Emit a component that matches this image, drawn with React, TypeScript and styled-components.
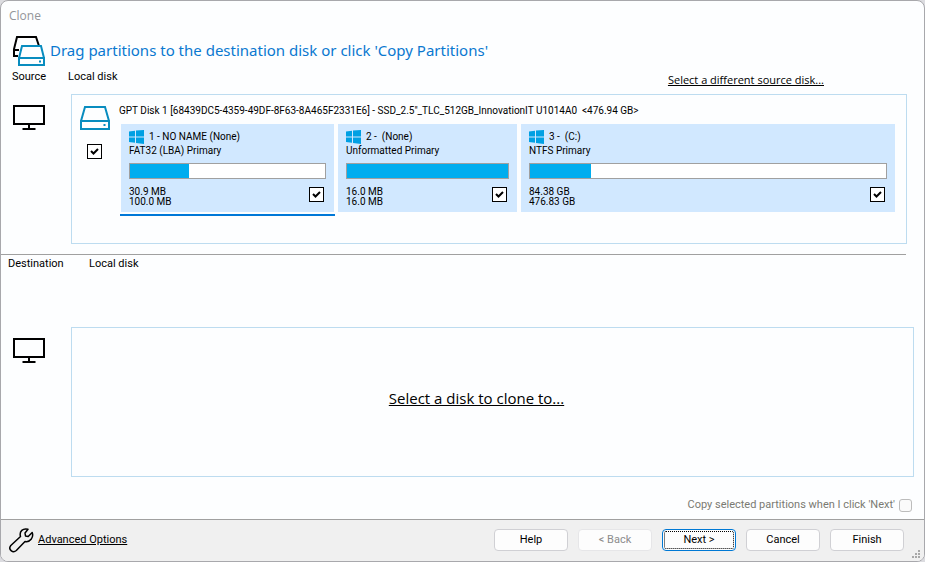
import React from "react";
import styled, { createGlobalStyle } from "styled-components";

const GlobalStyle = createGlobalStyle`
  *, *::before, *::after { box-sizing: border-box; }
  body {
    margin: 0;
    background: #dcdce0;
    color: #000;
    font-family: Roboto, "Noto Sans", sans-serif;
    font-size: 11px;
    line-height: 14px;
  }
  h1, h2, p { margin: 0; font-weight: 400; }
`;

const Dialog = styled.main`
  display: flex;
  flex-direction: column;
  min-height: 100vh;
  background: #fdfeff;
  border: 1px solid #a8a8ac;
  border-radius: 8px;
  overflow: hidden;
`;

const TitleBar = styled.header`
  padding: 6px 8px 0;
  height: 34px;
  color: #939599;
  font-family: "Open Sans", sans-serif;
  font-size: 12px;
  line-height: 18px;
`;

const Heading = styled.div`
  display: flex;
  align-items: center;
  gap: 4px;
  height: 32px;
  padding-left: 12px;
`;

const HeadingText = styled.h1`
  color: #0a78d0;
  font-family: "Noto Sans", sans-serif;
  font-size: 15px;
  line-height: 24px;
  padding-bottom: 2px;
`;

const SourceLabels = styled.div`
  display: grid;
  grid-template-columns: 56px 1fr auto;
  height: 27px;
  padding: 2px 100px 0 11px;
  line-height: 16px;
`;

const SourceLink = styled.a`
  padding-top: 3px;
  color: #000;
  font-family: "Open Sans", sans-serif;
  line-height: 16px;
`;

const DiskRow = styled.section<{ $right: number }>`
  display: grid;
  grid-template-columns: 58px 1fr;
  padding: 0 ${(p) => p.$right}px 0 12px;
  min-height: 150px;
`;

const IconSlot = styled.div`
  padding-top: 9px;
`;

const SourcePanel = styled.div`
  display: grid;
  grid-template-columns: 32px 1fr;
  gap: 8px;
  padding: 8px 11px 0 7px;
  border: 1px solid #bddcf0;
`;

const DiskColumn = styled.div`
  display: flex;
  flex-direction: column;
  align-items: center;
  gap: 13px;
  padding: 2px 1px 0 0;
`;

const DiskName = styled.h2`
  font-size: 10px;
  line-height: 16px;
  white-space: pre;
`;

const Partitions = styled.div`
  display: grid;
  grid-template-columns: 213fr 179fr 374fr;
  gap: 4px;
  padding: 5px 0 0 2px;
`;

const Partition = styled.article<{ $active?: boolean }>`
  position: relative;
  height: 88px;
  padding: 5px 8px 0;
  background: #d1e8ff;
  font-size: 10px;

  &::after {
    content: "";
    display: ${(p) => (p.$active ? "block" : "none")};
    position: absolute;
    left: -1px;
    right: -1px;
    bottom: -4px;
    height: 2px;
    background: #0078d7;
  }
`;

const PartitionName = styled.div`
  display: flex;
  align-items: center;
  gap: 5px;
  height: 15px;
  white-space: pre;
`;

const PartitionType = styled.p`
  line-height: 14px;
`;

const Meter = styled.div`
  height: 16px;
  margin-top: 5px;
  background: #fff;
  border: 1px solid #a0a0a0;
`;

const MeterFill = styled.div`
  height: 100%;
  background: #00adef;
`;

const PartitionFoot = styled.div`
  display: flex;
  justify-content: space-between;
  align-items: flex-start;
  padding: 8px 2px 0 0;
  line-height: 10px;
`;

const TickLabel = styled.label`
  display: grid;
  width: 15px;
  height: 15px;

  & > * { grid-area: 1 / 1; }
  & > svg { pointer-events: none; visibility: hidden; }
  & > input:checked + svg { visibility: visible; }
`;

const TickInput = styled.input`
  appearance: none;
  width: 15px;
  height: 15px;
  margin: 0;
  background: #fff;
  border: 1px solid #000;
`;

const Separator = styled.hr`
  width: calc(100% - 18px);
  height: 1px;
  margin: 10px 0 0;
  border: 0;
  background: #a0a0a0;
`;

const DestinationLabels = styled.div`
  display: grid;
  grid-template-columns: 81px 1fr;
  height: 72px;
  padding: 1px 0 0 7px;
  line-height: 16px;
`;

const DestinationPanel = styled.div`
  display: flex;
  align-items: center;
  justify-content: center;
  padding-bottom: 8px;
  border: 1px solid #bddcf0;
`;

const CloneLink = styled.a`
  margin-right: 32px;
  color: #000;
  font-family: "Open Sans", sans-serif;
  font-size: 15px;
  line-height: 20px;
`;

const CopyRow = styled.label`
  display: flex;
  justify-content: flex-end;
  align-items: center;
  gap: 4px;
  margin-top: auto;
  padding: 0 12px 6px 0;
  color: #7a7a72;
  line-height: 16px;
`;

const CopyInput = styled.input`
  appearance: none;
  width: 13px;
  height: 13px;
  margin: 0;
  background: #fafafa;
  border: 1px solid #bcbcbc;
  border-radius: 3px;
`;

const Footer = styled.footer`
  position: relative;
  display: flex;
  align-items: center;
  justify-content: space-between;
  height: 42px;
  padding: 0 20px 2px 8px;
  background: #f0f0f0;
  border-top: 1px solid #a0a0a0;
`;

const Advanced = styled.a`
  display: flex;
  align-items: center;
  gap: 4px;
  color: #000;
`;

const Buttons = styled.div`
  display: flex;
  gap: 10px;
`;

const Button = styled.button<{ $primary?: boolean }>`
  width: 74px;
  height: 22px;
  padding: 0;
  background: #fdfdfd;
  color: #000;
  border: 1px solid ${(p) => (p.$primary ? "#0078d4" : "#d0d0d4")};
  border-radius: 4px;
  font: inherit;
  line-height: 16px;
  outline: ${(p) => (p.$primary ? "1px dotted #000" : "none")};
  outline-offset: -3px;

  &:disabled { color: #8c8c8c; border-color: #e6e6e8; }
`;

const Grip = styled.svg`
  position: absolute;
  right: 4px;
  bottom: 3px;
`;

const Monitor = () => (
  <svg width="33" height="28" viewBox="0 0 33 28" fill="none" aria-hidden="true">
    <rect x="1" y="3" width="30" height="18" stroke="#000" strokeWidth="2" />
    <path d="M16 21v4M9.500 26h13" stroke="#000" strokeWidth="2" />
  </svg>
);

const Drive = () => (
  <svg width="31" height="26" viewBox="-1 0 31 26" fill="none" stroke="#088cbf" strokeWidth="2" aria-hidden="true">
    <path d="M1 16 5 2h20l4 14M1 16h28v8H1z" />
    <path d="M23.500 20h2" />
  </svg>
);

const DrivePair = () => (
  <svg width="33" height="32" viewBox="0 0 33 32" fill="none" strokeWidth="2" aria-hidden="true">
    <path d="M5 21H1v-7L4 2h19l3 9M1 15h5" stroke="#000" />
    <path d="M6 23 9 11h19l3 12M6 23h25v7H6z" fill="#fdfeff" stroke="#088cbf" />
    <path d="M26 26.500h2" stroke="#088cbf" />
  </svg>
);

const WindowsLogo = () => (
  <svg width="15" height="14" viewBox="0 0 15 14" fill="#00a0e3" aria-hidden="true">
    <path d="M0 1.500 6 .8v5.700H0zM7 .6 15 0v6.500H7zM0 7.500h6v5.300L0 12zM7 7.500h8V14l-8-1z" />
  </svg>
);

const Wrench = () => (
  <svg width="25" height="26" viewBox="0 0 25 26" fill="none" stroke="#000" strokeWidth="1.500" strokeLinejoin="round" strokeLinecap="round" aria-hidden="true">
    <path d="M19 2.300c-5-1.500-9 2-7.500 7.200L1.800 18.500c-3 4 2 8 5.500 5l8.700-9c5 1 9-4 7.200-9l-4 4-2.700-.5-.5-3z" />
  </svg>
);

const Tick = ({ name }: { name: string }) => (
  <TickLabel>
    <TickInput type="checkbox" defaultChecked aria-label={name} />
    <svg width="15" height="15" viewBox="0 0 15 15" fill="none" aria-hidden="true">
      <path d="m4 7 2.500 2.500L11 5" stroke="#000" strokeWidth="2" />
    </svg>
  </TickLabel>
);

const partitions = [
  { name: "1 - NO NAME (None)", type: "FAT32 (LBA) Primary", used: "30.9 MB", size: "100.0 MB", fill: 30, active: true },
  { name: "2 -  (None)", type: "Unformatted Primary", used: "16.0 MB", size: "16.0 MB", fill: 100 },
  { name: "3 -  (C:)", type: "NTFS Primary", used: "84.38 GB", size: "476.83 GB", fill: 17.2 },
];

export default function App() {
  return (
    <>
      <GlobalStyle />
      <Dialog>
        <TitleBar>Clone</TitleBar>
        <Heading>
          <DrivePair />
          <HeadingText>Drag partitions to the destination disk or click 'Copy Partitions'</HeadingText>
        </Heading>
        <SourceLabels>
          <span>Source</span>
          <span>Local disk</span>
          <SourceLink href="#source">Select a different source disk...</SourceLink>
        </SourceLabels>
        <DiskRow $right={17}>
          <IconSlot><Monitor /></IconSlot>
          <SourcePanel>
            <DiskColumn>
              <Drive />
              <Tick name="GPT Disk 1" />
            </DiskColumn>
            <div>
              <DiskName>{'GPT Disk 1 [68439DC5-4359-49DF-8F63-8A465F2331E6] - SSD_2.5"_TLC_512GB_InnovationIT U1014A0  <476.94 GB>'}</DiskName>
              <Partitions>
                {partitions.map((p) => (
                  <Partition key={p.name} $active={p.active}>
                    <PartitionName><WindowsLogo />{p.name}</PartitionName>
                    <PartitionType>{p.type}</PartitionType>
                    <Meter><MeterFill style={{ width: `${p.fill}%` }} /></Meter>
                    <PartitionFoot>
                      <div>
                        <p>{p.used}</p>
                        <p>{p.size}</p>
                      </div>
                      <Tick name={p.name} />
                    </PartitionFoot>
                  </Partition>
                ))}
              </Partitions>
            </div>
          </SourcePanel>
        </DiskRow>
        <Separator />
        <DestinationLabels>
          <span>Destination</span>
          <span>Local disk</span>
        </DestinationLabels>
        <DiskRow $right={10}>
          <IconSlot><Monitor /></IconSlot>
          <DestinationPanel>
            <CloneLink href="#destination">Select a disk to clone to...</CloneLink>
          </DestinationPanel>
        </DiskRow>
        <CopyRow>
          Copy selected partitions when I click 'Next'
          <CopyInput type="checkbox" disabled />
        </CopyRow>
        <Footer>
          <Advanced href="#advanced"><Wrench />Advanced Options</Advanced>
          <Buttons>
            <Button type="button">Help</Button>
            <Button type="button" disabled>&lt; Back</Button>
            <Button type="button" $primary>Next &gt;</Button>
            <Button type="button">Cancel</Button>
            <Button type="button">Finish</Button>
          </Buttons>
          <Grip width="8" height="8" viewBox="0 0 8 8" fill="#a8a8a8" aria-hidden="true">
            <path d="M6 0h2v2H6zM3 3h2v2H3zM6 3h2v2H6zM0 6h2v2H0zM3 6h2v2H3zM6 6h2v2H6z" />
          </Grip>
        </Footer>
      </Dialog>
    </>
  );
}
